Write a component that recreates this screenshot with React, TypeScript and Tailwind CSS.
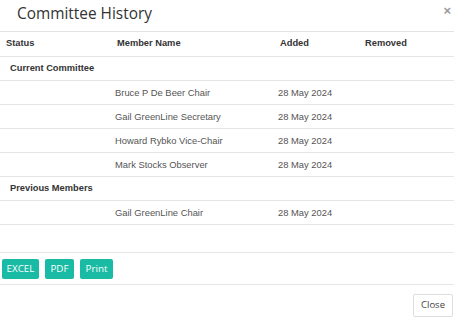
import React from "react";

const rows1 = [
  "Bruce P De Beer Chair",
  "Gail GreenLine Secretary",
  "Howard Rybko Vice-Chair",
  "Mark Stocks Observer",
];

function DataRow({ name }: { name: string }) {
  return (
    <div className="flex h-[24px] items-center border-b border-[#e6e6e6] pt-[1px] text-[9.4px] text-[#555]">
      <div className="w-[115px] shrink-0" />
      <div className="w-[163px] shrink-0">{name}</div>
      <div className="w-[87px] shrink-0">28 May 2024</div>
      <div className="flex-1" />
    </div>
  );
}

function GroupRow({ label }: { label: string }) {
  return (
    <div className="flex h-[24px] items-center border-b border-[#e6e6e6] pl-[10px] text-[9.3px] font-bold text-[#333]">
      {label}
    </div>
  );
}

export default function App() {
  return (
    <div
      className="w-[454px] h-[320px] bg-white overflow-hidden"
      style={{ fontFamily: '"Liberation Sans", Arial, sans-serif' }}
    >
      <div className="flex h-[31px] items-center justify-between pl-[17px] pr-[3px]">
        <div
          className="text-[15.4px] font-medium text-[#333] leading-none -mt-[3px]"
          style={{ fontFamily: '"Open Sans", sans-serif' }}
        >
          Committee History
        </div>
        <div className="text-[13px] font-bold text-[#999] leading-none -mt-[10px]">×</div>
      </div>
      <div className="border-t border-[#e0e4e6]">
        <div className="flex h-[25px] items-center border-b border-[#e6e6e6] text-[9.3px] font-bold text-[#333]">
          <div className="w-[117px] shrink-0 pl-[6px]">Status</div>
          <div className="w-[163px] shrink-0">Member Name</div>
          <div className="w-[85px] shrink-0">Added</div>
          <div className="flex-1">Removed</div>
        </div>
        <GroupRow label="Current Committee" />
        {rows1.map((r) => (
          <DataRow key={r} name={r} />
        ))}
        <GroupRow label="Previous Members" />
        <DataRow name="Gail GreenLine Chair" />
      </div>
      <div
        className="mt-[27px] border-t border-[#e6e6e6] pt-[6px] pb-[5px] pl-[2px] flex gap-[6px]"
        style={{ fontFamily: '"Open Sans", sans-serif' }}
      >
        <button className="h-[20px] w-[37px] rounded-[2px] bg-[#19bba4] text-[9.8px] font-medium text-white">EXCEL</button>
        <button className="h-[20px] w-[29px] rounded-[2px] bg-[#19bba4] text-[9.8px] font-medium text-white">PDF</button>
        <button className="h-[20px] w-[33px] rounded-[2px] bg-[#19bba4] text-[9.8px] font-medium text-white">Print</button>
      </div>
      <div className="border-t border-[#e6e6e6] flex justify-end pt-[9px] pr-[1px]">
        <button
          className="h-[23px] w-[40px] rounded-[2px] border border-[#ddd] bg-white text-[9.5px] text-[#444]"
          style={{ fontFamily: '"Open Sans", sans-serif' }}
        >
          Close
        </button>
      </div>
    </div>
  );
}
